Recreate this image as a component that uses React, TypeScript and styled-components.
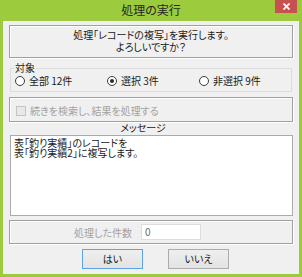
import React from 'react';
import styled, { createGlobalStyle } from 'styled-components';

const GlobalStyle = createGlobalStyle`
  html, body {
    margin: 0;
    padding: 0;
    background: #9ccb3d;
  }
  body {
    font-family: 'Noto Sans CJK JP', 'Noto Sans', sans-serif;
    font-feature-settings: 'palt';
  }
`;

const targets = [
  { label: '全部 12件', checked: false },
  { label: '選択 3件', checked: true },
  { label: '非選択 9件', checked: false },
];

const App = () => {
  return (
    <>
      <GlobalStyle />
      <Window>
        <TitleBar>
          <span />
          <Title>処理の実行</Title>
          <CloseButton>
            <svg width="7" height="7" viewBox="0 0 7 7">
              <path d="M0.5 0.5 L6.5 6.5 M6.5 0.5 L0.5 6.5" stroke="#fff" strokeWidth="1.8" />
            </svg>
          </CloseButton>
        </TitleBar>
        <Client>
          <MessageBox>
            <div>処理「レコードの複写」を実行します。</div>
            <div>よろしいですか？</div>
          </MessageBox>

          <Group>
            <Legend>対象</Legend>
            <RadioRow>
              {targets.map((t) => (
                <RadioLabel key={t.label}>
                  <RadioCircle $checked={t.checked} />
                  {t.label}
                </RadioLabel>
              ))}
            </RadioRow>
          </Group>

          <CheckPanel>
            <CheckBox />
            <DisabledText>続きを検索し、結果を処理する</DisabledText>
          </CheckPanel>

          <SectionLabel>メッセージ</SectionLabel>
          <MessageArea>
            <div>表「釣り実績」のレコードを</div>
            <div>表「釣り実績2」に複写します。</div>
          </MessageArea>

          <CountPanel>
            <CountLabel>処理した件数</CountLabel>
            <CountInput>0</CountInput>
          </CountPanel>

          <ButtonRow>
            <Button $primary>はい</Button>
            <Button>いいえ</Button>
          </ButtonRow>
        </Client>
      </Window>
    </>
  );
};

const Window = styled.div`
  width: 302px;
  height: 277px;
  box-sizing: border-box;
  padding: 0 3px 3px 3px;
  background: #9ccb3d;
  display: flex;
  flex-direction: column;
`;

const TitleBar = styled.div`
  height: 21px;
  margin: 0 -3px;
  display: grid;
  grid-template-columns: 1fr auto 1fr;
  align-items: start;
`;

const Title = styled.div`
  font-size: 12px;
  line-height: 20px;
  color: #262626;
`;

const CloseButton = styled.div`
  justify-self: end;
  margin-right: 5px;
  width: 22px;
  height: 13px;
  background: #c75050;
  display: flex;
  align-items: center;
  justify-content: center;
`;

const Client = styled.div`
  flex: 1;
  background: #f0f0f0;
  padding: 4px 6px 0 6px;
  display: flex;
  flex-direction: column;
  font-size: 10px;
  color: #1a1a1a;
`;

const Etched = styled.div`
  border: 1px solid #a0a0a0;
  box-shadow: inset 1px 1px 0 #fff, 1px 1px 0 #fff;
  box-sizing: border-box;
`;

const MessageBox = styled(Etched)`
  height: 33px;
  padding-top: 3px;
  text-align: center;
  line-height: 12px;
`;

const Group = styled.fieldset`
  margin: 4px 1px 0 1px;
  padding: 0 3px 3px 3px;
  border: 1px solid #dcdcdc;
  min-width: 0;
`;

const Legend = styled.legend`
  padding: 0 1px;
  font-size: 10px;
  line-height: 12px;
`;

const RadioRow = styled.div`
  display: grid;
  grid-template-columns: repeat(3, 92px);
  height: 14px;
  align-items: center;
`;

const RadioLabel = styled.label`
  display: flex;
  align-items: center;
  gap: 4px;
  padding-left: 1px;
  line-height: 12px;
  white-space: nowrap;
`;

const RadioCircle = styled.span<{ $checked?: boolean }>`
  width: 10px;
  height: 10px;
  box-sizing: border-box;
  border: 1px solid #3a3a3a;
  border-radius: 50%;
  background: #fff;
  display: flex;
  align-items: center;
  justify-content: center;

  &::after {
    content: '';
    width: 4px;
    height: 4px;
    border-radius: 50%;
    background: ${(p) => (p.$checked ? '#2a2a2a' : 'transparent')};
  }
`;

const CheckPanel = styled(Etched)`
  margin-top: 5px;
  height: 25px;
  padding: 3px 0 0 6px;
  display: flex;
  align-items: center;
  gap: 4px;
`;

const CheckBox = styled.span`
  width: 10px;
  height: 10px;
  box-sizing: border-box;
  border: 1px solid #c4c4c4;
  background: #e8e8e8;
`;

const DisabledText = styled.span`
  color: #a2a2a2;
  line-height: 12px;
`;

const SectionLabel = styled.div`
  height: 12px;
  line-height: 12px;
  text-align: center;
  padding-right: 16px;
`;

const MessageArea = styled.div`
  margin: 1px 0 0 1px;
  height: 81px;
  box-sizing: border-box;
  border: 1px solid #ababab;
  background: #fff;
  padding: 2px 3px;
  line-height: 10px;
`;

const CountPanel = styled(Etched)`
  margin-top: 4px;
  height: 24px;
  display: flex;
  align-items: center;
  gap: 9px;
`;

const CountLabel = styled.div`
  width: 122px;
  text-align: right;
  color: #a2a2a2;
`;

const CountInput = styled.div`
  width: 60px;
  height: 16px;
  box-sizing: border-box;
  border: 1px solid #dedede;
  background: #fff;
  color: #6d6d6d;
  padding-left: 3px;
  line-height: 14px;
`;

const ButtonRow = styled.div`
  margin-top: 5px;
  padding-left: 73px;
  display: flex;
  gap: 25px;
`;

const Button = styled.div<{ $primary?: boolean }>`
  width: 61px;
  height: 20px;
  box-sizing: border-box;
  border: 1px solid ${(p) => (p.$primary ? '#5fa3e6' : '#acacac')};
  background: linear-gradient(#efefef, #e3e3e3);
  display: flex;
  align-items: center;
  justify-content: center;
  line-height: 12px;
`;

export default App;
